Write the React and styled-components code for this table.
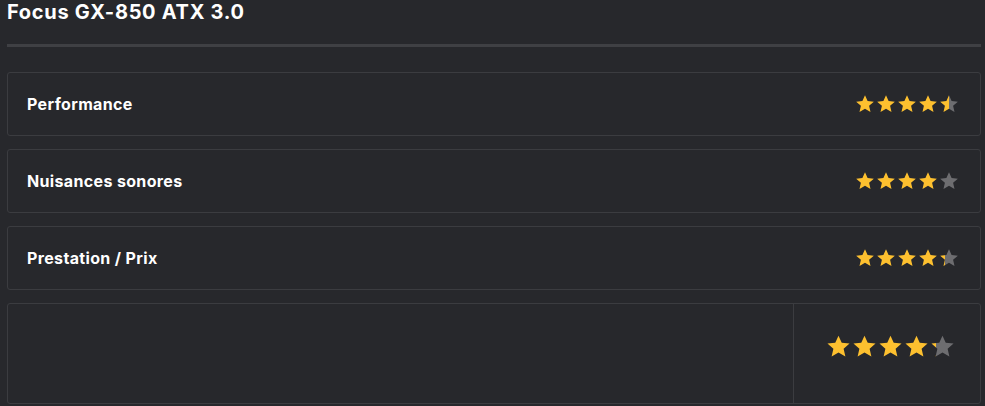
import React from 'react'
import styled, { createGlobalStyle } from 'styled-components'

const GlobalStyle = createGlobalStyle`
  html, body {
    margin: 0;
    padding: 0;
    background: #27282c;
  }
  body {
    font-family: Inter, "Open Sans", sans-serif;
    color: #fff;
  }
`

const Page = styled.div`
  width: 985px;
  height: 406px;
  overflow: hidden;
  padding: 0 4px 0 7px;
  box-sizing: border-box;
`

const Title = styled.h2`
  margin: 0;
  padding-top: 1px;
  font-size: 20px;
  line-height: 22px;
  font-weight: 700;
  letter-spacing: 0.7px;
`

const Rule = styled.div`
  height: 3px;
  background: #3f4044;
  margin-top: 21px;
`

const List = styled.div`
  display: flex;
  flex-direction: column;
  gap: 13px;
  margin-top: 25px;
`

const Card = styled.div`
  display: flex;
  align-items: center;
  justify-content: space-between;
  height: 64px;
  box-sizing: border-box;
  border: 1px solid #3b3c40;
  border-radius: 3px;
  padding: 0 21px 0 19px;
`

const Label = styled.span`
  font-size: 16px;
  font-weight: 700;
  letter-spacing: 0.35px;
`

const BigCard = styled.div`
  display: flex;
  height: 101px;
  box-sizing: border-box;
  border: 1px solid #3b3c40;
  border-radius: 3px;
`

const Comment = styled.div`
  flex: 1;
`

const Score = styled.div`
  width: 187px;
  border-left: 1px solid #3b3c40;
  display: flex;
  justify-content: center;
  padding: 30px 0 0 6px;
  box-sizing: border-box;
`

const Stars = styled.div`
  display: flex;
  gap: ${p => p.$gap}px;
`

const STAR = 'M12 1.6l3.1 6.9 7.5.7-5.7 5 1.7 7.4L12 17.8l-6.6 3.8 1.7-7.4-5.7-5 7.5-.7z'

function Star({ fill, size, id }) {
  const pct = Math.round(fill * 100)
  return (
    <svg width={size} height={size} viewBox="0 0 24 24">
      <defs>
        <linearGradient id={id}>
          <stop offset={`${pct}%`} stopColor="#fdc02f" />
          <stop offset={`${pct}%`} stopColor="#6d6d70" />
        </linearGradient>
      </defs>
      <path d={STAR} fill={`url(#${id})`} />
    </svg>
  )
}

function Rating({ value, size, gap, name }) {
  return (
    <Stars $gap={gap}>
      {[0, 1, 2, 3, 4].map(i => (
        <Star key={i} id={`${name}-${i}`} size={size} fill={Math.max(0, Math.min(1, value - i))} />
      ))}
    </Stars>
  )
}

const criteria = [
  { label: 'Performance', value: 4.5 },
  { label: 'Nuisances sonores', value: 4 },
  { label: 'Prestation / Prix', value: 4.3 },
]

export default function App() {
  return (
    <Page>
      <GlobalStyle />
      <Title>Focus GX-850 ATX 3.0</Title>
      <Rule />
      <List>
        {criteria.map((c, i) => (
          <Card key={c.label}>
            <Label>{c.label}</Label>
            <Rating value={c.value} size={20} gap={1} name={`r${i}`} />
          </Card>
        ))}
        <BigCard>
          <Comment />
          <Score>
            <Rating value={4.2} size={25} gap={1} name="total" />
          </Score>
        </BigCard>
      </List>
    </Page>
  )
}
